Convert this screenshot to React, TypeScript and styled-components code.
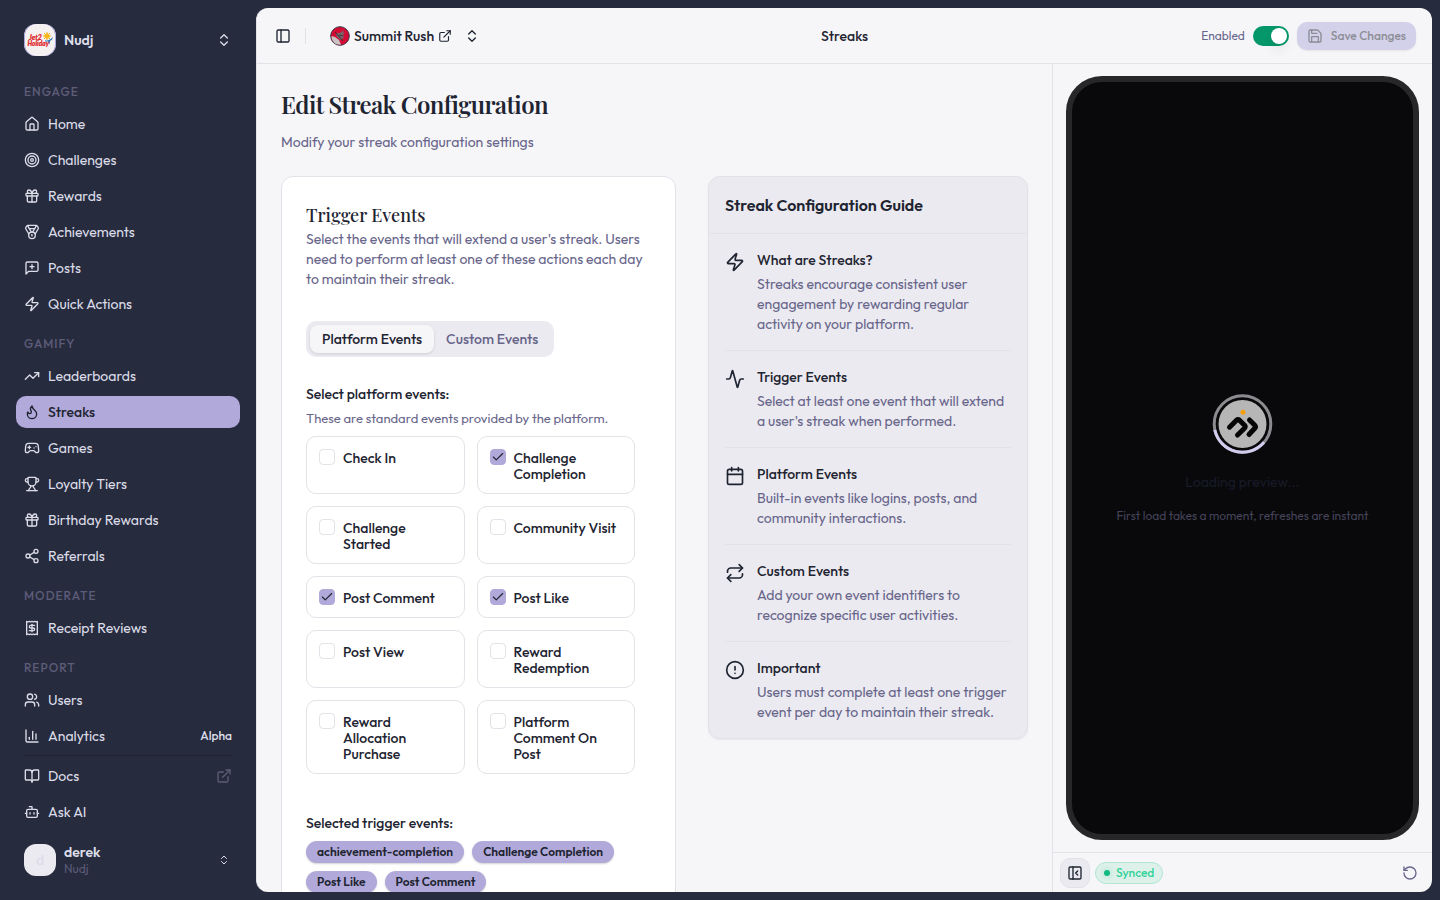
import React, { useState } from "react";
import styled, { createGlobalStyle, css } from "styled-components";
import {
  Activity,
  BookOpen,
  Bot,
  Calendar,
  ChartColumn,
  Check,
  ChevronsUpDown,
  CircleAlert,
  ExternalLink,
  Gamepad2,
  Gift,
  House,
  Medal,
  PanelLeft,
  PanelLeftClose,
  Receipt,
  Repeat,
  RotateCcw,
  Save,
  Share2,
  Target,
  TrendingUp,
  Trophy,
  Users,
  Zap,
} from "lucide-react";

const color = {
  shell: "#272b3e",
  shellText: "#dcdde8",
  shellMuted: "#5d5c79",
  accent: "#b0a9da",
  page: "#f6f6f9",
  ink: "#1e2431",
  muted: "#67658a",
  line: "#e2e2e8",
  soft: "#ebeaf0",
};

const GlobalStyle = createGlobalStyle`
  *, *::before, *::after { box-sizing: border-box; }
  body {
    margin: 0;
    background: ${color.shell};
    color: ${color.ink};
    font-family: Outfit, Lato, sans-serif;
    font-size: 14px;
    line-height: 20px;
  }
  h1, h2, h3, p, ul { margin: 0; padding: 0; }
  ul { list-style: none; }
  button { font: inherit; color: inherit; border: 0; padding: 0; background: none; cursor: pointer; }
  a { color: inherit; text-decoration: none; }
  svg { display: block; flex-shrink: 0; }
`;

const Shell = styled.div`
  display: flex;
  height: 100vh;
`;

/* Sidebar */
const Sidebar = styled.aside`
  display: flex;
  flex-direction: column;
  flex: 0 0 256px;
  padding: 16px;
  color: ${color.shellText};
`;

const AccountButton = styled.button`
  display: flex;
  align-items: center;
  gap: 8px;
  flex-shrink: 0;
  height: 48px;
  padding: 0 8px;
  text-align: left;
`;

const Avatar = styled.span`
  display: grid;
  place-items: center;
  width: 32px;
  height: 32px;
  border-radius: 12px;
  overflow: hidden;
  background: ${color.soft};
  color: #dcdaec;
`;

const AccountText = styled.span`
  display: flex;
  flex-direction: column;
  flex: 1;
  font-weight: 600;
  line-height: 18px;
`;

const AccountOrg = styled.span`
  color: ${color.shellMuted};
  font-size: 12px;
  font-weight: 400;
  line-height: 16px;
`;

const AccountChevron = styled.span`
  display: grid;
  place-items: center;
  width: 16px;
  height: 16px;
`;

const Nav = styled.nav`
  display: flex;
  flex-direction: column;
  gap: 8px;
  flex: 1;
  min-height: 0;
  overflow: hidden;
  padding-top: 12px;
`;

const GroupLabel = styled.h2`
  padding: 0 8px;
  color: ${color.shellMuted};
  font-size: 12px;
  font-weight: 500;
  line-height: 32px;
  letter-spacing: 1px;
  text-transform: uppercase;
`;

const NavList = styled.ul`
  display: flex;
  flex-direction: column;
  gap: 4px;
`;

const NavLink = styled.a<{ $active?: boolean }>`
  display: flex;
  align-items: center;
  gap: 8px;
  height: 32px;
  padding: 0 8px;
  border-radius: 10px;
  ${(p) =>
    p.$active &&
    css`
      background: ${color.accent};
      color: ${color.ink};
      font-weight: 500;
    `}
`;

const NavText = styled.span`
  flex: 1;
`;

const NavTag = styled.span`
  font-size: 12px;
  font-weight: 500;
`;

const DimIcon = styled.span`
  color: ${color.shellMuted};
`;

const SidebarFooter = styled.div`
  display: flex;
  flex-direction: column;
  gap: 8px;
`;

const FooterRule = styled.hr`
  height: 1px;
  margin: 0 8px 4px;
  border: 0;
  background: #1d2130;
`;

/* Main frame */
const Main = styled.main`
  display: flex;
  flex-direction: column;
  flex: 1;
  min-width: 0;
  margin: 8px 8px 8px 0;
  border-left: 1px solid ${color.line};
  border-radius: 12px;
  overflow: hidden;
  background: ${color.page};
`;

const TopBar = styled.header`
  display: grid;
  grid-template-columns: 1fr auto 1fr;
  align-items: center;
  flex-shrink: 0;
  height: 56px;
  padding: 0 16px;
  border-bottom: 1px solid ${color.line};
`;

const TopLeft = styled.div`
  display: flex;
  align-items: center;
`;

const PanelButton = styled.button`
  padding: 2px;
`;

const TopDivider = styled.span`
  width: 1px;
  height: 16px;
  margin: 0 24px 0 12px;
  background: ${color.line};
`;

const CommunityLink = styled.a`
  display: flex;
  align-items: center;
  gap: 4px;
  margin-right: 12px;
  font-weight: 500;
`;

const TopTitle = styled.span`
  font-weight: 500;
`;

const TopRight = styled.div`
  display: flex;
  align-items: center;
  justify-content: flex-end;
  gap: 8px;
`;

const SwitchLabel = styled.label`
  display: flex;
  align-items: center;
  gap: 8px;
  color: ${color.muted};
  font-size: 12px;
`;

const Switch = styled.input`
  appearance: none;
  display: flex;
  align-items: center;
  width: 36px;
  height: 20px;
  margin: 0;
  padding: 0 2px;
  border-radius: 10px;
  background: #cfced9;
  cursor: pointer;

  &::before {
    content: "";
    width: 16px;
    height: 16px;
    border-radius: 8px;
    background: #fff;
    box-shadow: 0 8px 12px rgba(0, 0, 0, 0.06);
  }
  &:checked {
    justify-content: flex-end;
    background: #059669;
  }
`;

const SaveButton = styled.button`
  display: flex;
  align-items: center;
  gap: 8px;
  height: 28px;
  padding: 0 10px;
  border-radius: 10px;
  background: ${color.accent};
  box-shadow: 0 1px 2px rgba(0, 0, 0, 0.15);
  font-size: 12px;
  font-weight: 500;
  opacity: 0.5;
`;

const Body = styled.div`
  display: flex;
  flex: 1;
  min-height: 0;
`;

const Content = styled.section`
  flex: 1;
  min-width: 0;
  padding: 24px;
  overflow-y: auto;
  scrollbar-width: none;
`;

const PageTitle = styled.h1`
  font-family: "Playfair Display", "Liberation Serif", serif;
  font-size: 24px;
  font-weight: 600;
  line-height: 32px;
  letter-spacing: -0.025em;
`;

const PageIntro = styled.p`
  margin: 12px 0 24px;
  color: ${color.muted};
`;

const Columns = styled.div`
  display: grid;
  grid-template-columns: minmax(0, 1fr) 320px;
  align-items: start;
  gap: 32px;
`;

const Card = styled.section`
  padding: 24px;
  border: 1px solid ${color.line};
  border-radius: 12px;
  background: #fff;
`;

const CardTitle = styled.h2`
  font-family: "Playfair Display", "Liberation Serif", serif;
  font-size: 18px;
  font-weight: 500;
  line-height: 28px;
`;

const Muted = styled.p`
  color: ${color.muted};
`;

const TabList = styled.div`
  display: inline-flex;
  margin: 32px 0 27px;
  padding: 4px;
  border-radius: 10px;
  background: ${color.soft};
`;

const Tab = styled.button<{ $active?: boolean }>`
  height: 28px;
  padding: 0 12px;
  border-radius: 8px;
  color: ${color.muted};
  font-weight: 500;
  ${(p) =>
    p.$active &&
    css`
      background: ${color.page};
      box-shadow: 0 1px 3px rgba(0, 0, 0, 0.12);
      color: ${color.ink};
    `}
`;

const FieldTitle = styled.h3`
  font-size: 14px;
  font-weight: 500;
  line-height: 20px;
`;

const FieldHint = styled.p`
  margin: 4px 0 8px;
  color: ${color.muted};
  font-size: 13px;
`;

const Options = styled.div`
  display: grid;
  grid-template-columns: 1fr 1fr;
  gap: 12px;
  padding-right: 16px;
`;

const Option = styled.label`
  display: flex;
  align-items: flex-start;
  gap: 8px;
  padding: 13px 12px 11px;
  border: 1px solid ${color.line};
  border-radius: 10px;
  font-weight: 500;
  line-height: 16px;
  cursor: pointer;
`;

const BoxWrap = styled.span`
  display: grid;
  flex-shrink: 0;
  margin-top: -1px;

  > * {
    grid-area: 1 / 1;
    place-self: center;
  }
  > svg {
    pointer-events: none;
  }
`;

const CheckInput = styled.input`
  appearance: none;
  width: 16px;
  height: 16px;
  margin: 0;
  border: 1px solid ${color.line};
  border-radius: 4px;
  background: #fff;
  &:checked {
    border-color: ${color.accent};
    background: ${color.accent};
  }
`;

const SelectedTitle = styled(FieldTitle)`
  margin: 39px 0 8px;
`;

const Badges = styled.ul`
  display: flex;
  flex-wrap: wrap;
  gap: 8px;
`;

const Badge = styled.li`
  padding: 0 11px;
  border-radius: 11px;
  background: ${color.accent};
  box-shadow: 0 1px 2px rgba(0, 0, 0, 0.18);
  font-size: 12px;
  font-weight: 600;
  line-height: 22px;
`;

const Guide = styled.aside`
  border: 1px solid ${color.line};
  border-radius: 12px;
  background: ${color.soft};
  box-shadow: 0 1px 2px rgba(0, 0, 0, 0.06);
`;

const GuideTitle = styled.h2`
  padding: 16px;
  border-bottom: 1px solid ${color.line};
  font-size: 16px;
  font-weight: 600;
  line-height: 24px;
`;

const GuideList = styled.ul`
  padding: 0 16px;
`;

const GuideItem = styled.li`
  display: flex;
  gap: 12px;
  padding: 16px 0;

  & + & {
    border-top: 1px solid ${color.line};
  }
  > svg {
    margin-top: 2px;
  }
`;

const GuideText = styled.div`
  display: flex;
  flex-direction: column;
  gap: 4px;
  min-width: 0;
`;

/* Preview panel */
const Preview = styled.aside`
  display: flex;
  flex-direction: column;
  flex: 0 0 380px;
  border-left: 1px solid ${color.line};
`;

const PreviewStage = styled.div`
  display: flex;
  flex: 1;
  min-height: 0;
  padding: 12px 13px;
`;

const Phone = styled.div`
  display: flex;
  flex-direction: column;
  align-items: center;
  justify-content: center;
  gap: 16px;
  flex: 1;
  border: 6px solid #27272a;
  border-radius: 36px;
  background: #09090b;
`;

const LoadingText = styled.p`
  color: #171b27;
`;

const LoadingHint = styled.p`
  color: #454459;
  font-size: 12px;
  line-height: 16px;
`;

const PreviewBar = styled.footer`
  display: flex;
  align-items: center;
  gap: 5px;
  height: 40px;
  padding: 0 14px 0 7px;
  border-top: 1px solid ${color.line};
`;

const CollapseButton = styled.button`
  display: grid;
  place-items: center;
  width: 30px;
  height: 30px;
  border: 1px solid ${color.line};
  border-radius: 10px;
  background: ${color.soft};
`;

const SyncBadge = styled.span`
  display: flex;
  align-items: center;
  gap: 6px;
  height: 22px;
  margin-right: auto;
  padding: 0 8px;
  border: 1px solid #b0e6d2;
  border-radius: 11px;
  background: #ddf1ea;
  color: #34d399;
  font-size: 12px;
  font-weight: 500;
`;

const SyncDot = styled.span`
  width: 6px;
  height: 6px;
  border-radius: 3px;
  background: #10b981;
  box-shadow: 0 0 6px rgba(16, 185, 129, 0.35);
`;

const ReloadButton = styled.button`
  color: ${color.muted};
`;

/* Drawings */
type IconProps = { size?: number };

const LineIcon = ({ size = 16, children }: IconProps & { children: React.ReactNode }) => (
  <svg
    width={size}
    height={size}
    viewBox="0 0 24 24"
    fill="none"
    stroke="currentColor"
    strokeWidth="2"
    strokeLinecap="round"
    strokeLinejoin="round"
    aria-hidden="true"
  >
    {children}
  </svg>
);

const PostIcon = (p: IconProps) => (
  <LineIcon {...p}>
    <path d="M21 15a2 2 0 0 1-2 2H7l-4 4V5a2 2 0 0 1 2-2h14a2 2 0 0 1 2 2z" />
    <path d="M12 7v6M9 10h6" />
  </LineIcon>
);

const FlameIcon = (p: IconProps) => (
  <LineIcon {...p}>
    <path d="M8.5 14.5A2.5 2.5 0 0 0 11 12c0-1.38-.5-2-1-3-1.072-2.143-.224-4.054 2-6 .5 2.5 2 4.9 4 6.5 2 1.6 3 3.5 3 5.5a7 7 0 1 1-14 0c0-1.153.433-2.294 1-3a2.5 2.5 0 0 0 2.5 2.5z" />
  </LineIcon>
);

const TenantLogo = () => (
  <svg width="32" height="32" viewBox="0 0 32 32" aria-hidden="true">
    <rect width="32" height="32" fill="#aaa5dc" />
    <rect x="1" width="30" height="32" rx="12" fill="#f5f1f0" />
    <g stroke="#f6b21b" strokeWidth="1">
      <path d="M23 8v8M19 12h8M20 9l6 6M26 9l-6 6" />
    </g>
    <circle cx="23" cy="12" r="2.6" fill="#f8b81c" />
    <path d="M21 16.500c3 0 5-.5 8-3.500-.5 2-1 3-3 4l0 3.500-2-3-3 0z" fill="#2f78b8" />
    <g
      fill="#e0242b"
      stroke="#e0242b"
      strokeWidth="0.2"
      fontFamily="Lato, sans-serif"
      fontWeight="900"
      fontStyle="italic"
    >
      <text x="5" y="16" fontSize="7">Jet2</text>
      <text x="3.500" y="22" fontSize="6.500">Holiday</text>
    </g>
  </svg>
);

const CommunityLogo = () => (
  <svg width="20" height="20" viewBox="0 0 20 20" aria-hidden="true">
    <circle cx="10" cy="10" r="9.3" fill="#d40b35" stroke="#343640" strokeWidth="1" />
    <path d="M1.500 10l3.500 1 4 3 2 4.500C6 19.500 1.500 16 1.500 10z" fill="#c9c3c4" />
    <path d="M7 7l3 0 4-3-1 3 2-1-2 3 1 2-3 3-3-2-2-3z" fill="#77686c" />
    <path d="M5 6l8 9M9 9l4 1" stroke="#3c3237" strokeWidth="1" fill="none" />
  </svg>
);

const LoadingMark = () => (
  <svg width="64" height="64" viewBox="-2 -2 64 64" fill="none" aria-hidden="true">
    <circle cx="29.500" cy="30" r="28.300" stroke="#8c8c90" strokeWidth="3" />
    <path d="M1.800 36A28.300 28.300 0 0 0 51 48.300" stroke="#d2cdee" strokeWidth="3" />
    <circle cx="29.500" cy="30" r="24" fill="#b6b6b6" />
    <circle cx="30" cy="18.300" r="2.500" fill="#f59e0b" />
    <g stroke="#060606" strokeWidth="5" strokeLinecap="round" strokeLinejoin="round">
      <path d="M16.500 33.200l7-7q1.500-1.300 3 0l5 5q1.300 1.500 0 3L24.500 41" />
      <path d="M36.500 26l5.300 5.300q1.300 1.500 0 3L36 40.500" />
    </g>
  </svg>
);

/* Data */
const navGroups = [
  {
    label: "Engage",
    items: [
      { text: "Home", icon: House },
      { text: "Challenges", icon: Target },
      { text: "Rewards", icon: Gift },
      { text: "Achievements", icon: Medal },
      { text: "Posts", icon: PostIcon },
      { text: "Quick Actions", icon: Zap },
    ],
  },
  {
    label: "Gamify",
    items: [
      { text: "Leaderboards", icon: TrendingUp },
      { text: "Streaks", icon: FlameIcon, active: true },
      { text: "Games", icon: Gamepad2 },
      { text: "Loyalty Tiers", icon: Trophy },
      { text: "Birthday Rewards", icon: Gift },
      { text: "Referrals", icon: Share2 },
    ],
  },
  { label: "Moderate", items: [{ text: "Receipt Reviews", icon: Receipt }] },
  {
    label: "Report",
    items: [
      { text: "Users", icon: Users },
      { text: "Analytics", icon: ChartColumn, tag: "Alpha" },
    ],
  },
] as {
  label: string;
  items: { text: string; icon: React.ComponentType<IconProps>; active?: boolean; tag?: string }[];
}[];

const platformEvents = [
  "Check In",
  "Challenge Completion",
  "Challenge Started",
  "Community Visit",
  "Post Comment",
  "Post Like",
  "Post View",
  "Reward Redemption",
  "Reward Allocation Purchase",
  "Platform Comment On Post",
];

const guideItems = [
  {
    icon: Zap,
    title: "What are Streaks?",
    text: "Streaks encourage consistent user engagement by rewarding regular activity on your platform.",
  },
  {
    icon: Activity,
    title: "Trigger Events",
    text: "Select at least one event that will extend a user's streak when performed.",
  },
  {
    icon: Calendar,
    title: "Platform Events",
    text: "Built-in events like logins, posts, and community interactions.",
  },
  {
    icon: Repeat,
    title: "Custom Events",
    text: "Add your own event identifiers to recognize specific user activities.",
  },
  {
    icon: CircleAlert,
    title: "Important",
    text: "Users must complete at least one trigger event per day to maintain their streak.",
  },
];

export default function App() {
  const [enabled, setEnabled] = useState(true);
  const [tab, setTab] = useState("Platform Events");
  const [selected, setSelected] = useState([
    "achievement-completion",
    "Challenge Completion",
    "Post Like",
    "Post Comment",
  ]);

  const toggle = (name: string) =>
    setSelected((s) => (s.includes(name) ? s.filter((n) => n !== name) : [...s, name]));

  return (
    <Shell>
      <GlobalStyle />
      <Sidebar>
        <AccountButton type="button">
          <Avatar>
            <TenantLogo />
          </Avatar>
          <AccountText>Nudj</AccountText>
          <AccountChevron>
            <ChevronsUpDown size={16} />
          </AccountChevron>
        </AccountButton>
        <Nav aria-label="Main">
          {navGroups.map((group) => (
            <div key={group.label}>
              <GroupLabel>{group.label}</GroupLabel>
              <NavList>
                {group.items.map(({ text, icon: Icon, active, tag }) => (
                  <li key={text}>
                    <NavLink href="#" $active={active} aria-current={active ? "page" : undefined}>
                      <Icon size={16} />
                      <NavText>{text}</NavText>
                      {tag && <NavTag>{tag}</NavTag>}
                    </NavLink>
                  </li>
                ))}
              </NavList>
            </div>
          ))}
        </Nav>
        <SidebarFooter>
          <div>
            <FooterRule />
            <NavList>
              <li>
                <NavLink href="#">
                  <BookOpen size={16} />
                  <NavText>Docs</NavText>
                  <DimIcon>
                    <ExternalLink size={16} />
                  </DimIcon>
                </NavLink>
              </li>
              <li>
                <NavLink href="#">
                  <Bot size={16} />
                  <NavText>Ask AI</NavText>
                </NavLink>
              </li>
            </NavList>
          </div>
          <AccountButton type="button">
            <Avatar>d</Avatar>
            <AccountText>
              derek
              <AccountOrg>Nudj</AccountOrg>
            </AccountText>
            <AccountChevron>
              <ChevronsUpDown size={12} />
            </AccountChevron>
          </AccountButton>
        </SidebarFooter>
      </Sidebar>

      <Main>
        <TopBar>
          <TopLeft>
            <PanelButton type="button" aria-label="Toggle sidebar">
              <PanelLeft size={16} />
            </PanelButton>
            <TopDivider />
            <CommunityLink href="#">
              <CommunityLogo />
              Summit Rush
              <ExternalLink size={14} />
            </CommunityLink>
            <button type="button" aria-label="Switch community">
              <ChevronsUpDown size={16} />
            </button>
          </TopLeft>
          <TopTitle>Streaks</TopTitle>
          <TopRight>
            <SwitchLabel>
              Enabled
              <Switch
                type="checkbox"
                role="switch"
                checked={enabled}
                onChange={() => setEnabled(!enabled)}
              />
            </SwitchLabel>
            <SaveButton type="button">
              <Save size={16} />
              Save Changes
            </SaveButton>
          </TopRight>
        </TopBar>

        <Body>
          <Content>
            <PageTitle>Edit Streak Configuration</PageTitle>
            <PageIntro>Modify your streak configuration settings</PageIntro>
            <Columns>
              <Card>
                <CardTitle>Trigger Events</CardTitle>
                <Muted>
                  Select the events that will extend a user's streak. Users need to perform at least
                  one of these actions each day to maintain their streak.
                </Muted>
                <TabList role="tablist">
                  {["Platform Events", "Custom Events"].map((name) => (
                    <Tab
                      key={name}
                      type="button"
                      role="tab"
                      aria-selected={tab === name}
                      $active={tab === name}
                      onClick={() => setTab(name)}
                    >
                      {name}
                    </Tab>
                  ))}
                </TabList>
                <FieldTitle>Select platform events:</FieldTitle>
                <FieldHint>These are standard events provided by the platform.</FieldHint>
                <Options>
                  {platformEvents.map((name) => (
                    <Option key={name}>
                      <BoxWrap>
                        <CheckInput
                          type="checkbox"
                          checked={selected.includes(name)}
                          onChange={() => toggle(name)}
                        />
                        {selected.includes(name) && <Check size={14} />}
                      </BoxWrap>
                      {name}
                    </Option>
                  ))}
                </Options>
                <SelectedTitle>Selected trigger events:</SelectedTitle>
                <Badges>
                  {selected.map((name) => (
                    <Badge key={name}>{name}</Badge>
                  ))}
                </Badges>
              </Card>

              <Guide>
                <GuideTitle>Streak Configuration Guide</GuideTitle>
                <GuideList>
                  {guideItems.map(({ icon: Icon, title, text }) => (
                    <GuideItem key={title}>
                      <Icon size={20} />
                      <GuideText>
                        <FieldTitle>{title}</FieldTitle>
                        <Muted>{text}</Muted>
                      </GuideText>
                    </GuideItem>
                  ))}
                </GuideList>
              </Guide>
            </Columns>
          </Content>

          <Preview>
            <PreviewStage>
              <Phone>
                <LoadingMark />
                <LoadingText>Loading preview...</LoadingText>
                <LoadingHint>First load takes a moment, refreshes are instant</LoadingHint>
              </Phone>
            </PreviewStage>
            <PreviewBar>
              <CollapseButton type="button" aria-label="Collapse preview">
                <PanelLeftClose size={16} />
              </CollapseButton>
              <SyncBadge>
                <SyncDot />
                Synced
              </SyncBadge>
              <ReloadButton type="button" aria-label="Reload preview">
                <RotateCcw size={16} />
              </ReloadButton>
            </PreviewBar>
          </Preview>
        </Body>
      </Main>
    </Shell>
  );
}
